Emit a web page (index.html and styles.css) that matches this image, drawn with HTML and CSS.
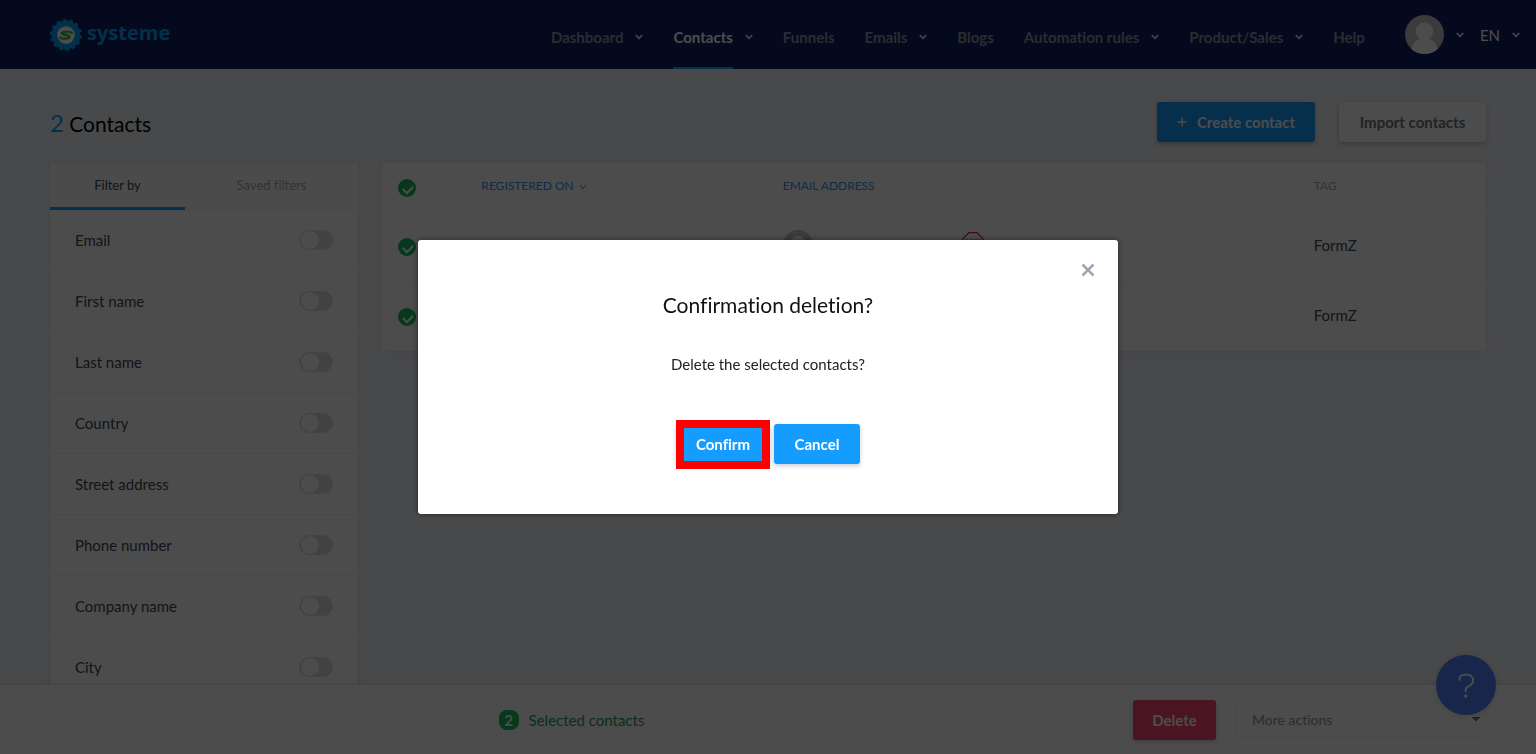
FILE: index.html
```html
<!DOCTYPE html>
<html lang="en">
<head>
<meta charset="utf-8">
<title>Contacts - systeme</title>
<link rel="stylesheet" href="styles.css">
</head>
<body>
<svg class="sprite" aria-hidden="true">
  <symbol id="chevron" viewBox="0 0 8 6"><path d="M.8 1l3.200 3.400L7.200 1" fill="none" stroke="currentColor" stroke-width="1.400"/></symbol>
  <symbol id="person" viewBox="0 0 40 40"><circle cx="20" cy="20" r="20" fill="#c5c5c5"/><circle cx="20" cy="16.500" r="9" fill="#fff"/><path d="M6.500 34.800C7.500 28.500 12 25 16 24h8c4 1 8.500 4.500 9.500 10.800A20 20 0 0 1 6.500 34.800z" fill="#fff"/></symbol>
</svg>
<div class="app">
  <header class="topbar">
    <a class="logo" href="#">
      <svg class="logo-mark" viewBox="0 0 32 32" aria-hidden="true">
        <circle cx="16" cy="16" r="14.300" fill="#04a4f4"/>
        <circle cx="16" cy="16" r="14" fill="none" stroke="#04a4f4" stroke-width="3.800" pathLength="28" stroke-dasharray="1.100 .9"/>
        <circle cx="16" cy="16" r="8.800" fill="#fff"/>
        <path d="M22.500 14.500c-1-1.600-3.200-2-6-1.900-3.600 0-5 1-4.500 2.100.5 1 7.500 1.200 7.500 2.900 0 1.600-2 2-4.500 2-2.600 0-4.700-.3-5.500-1.900" fill="none" stroke="#44bd44" stroke-width="2.400"/>
      </svg>
      <span>systeme</span>
    </a>
    <nav class="nav">
      <a href="#"><span>Dashboard</span><svg class="chev"><use href="#chevron"/></svg></a>
      <a class="active" href="#"><span>Contacts</span><svg class="chev"><use href="#chevron"/></svg></a>
      <a href="#"><span>Funnels</span></a>
      <a href="#"><span>Emails</span><svg class="chev"><use href="#chevron"/></svg></a>
      <a href="#"><span>Blogs</span></a>
      <a href="#"><span>Automation rules</span><svg class="chev"><use href="#chevron"/></svg></a>
      <a href="#"><span>Product/Sales</span><svg class="chev"><use href="#chevron"/></svg></a>
      <a href="#"><span>Help</span></a>
    </nav>
    <button class="menu-button" type="button" aria-label="Account"><svg class="avatar"><use href="#person"/></svg><svg class="chev"><use href="#chevron"/></svg></button>
    <button class="menu-button lang" type="button">EN<svg class="chev"><use href="#chevron"/></svg></button>
  </header>

  <main class="main">
    <div class="heading">
      <h1><span class="count">2</span> Contacts</h1>
      <button class="btn btn-primary create" type="button"><svg class="plus" viewBox="0 0 10 10" aria-hidden="true"><path d="M5 .5v9M.5 5h9" stroke="currentColor" stroke-width="1.300"/></svg>Create contact</button>
      <button class="btn btn-light" type="button">Import contacts</button>
    </div>
    <div class="columns">
      <aside class="card filters">
        <div class="tabs">
          <button class="tab selected" type="button">Filter by</button>
          <button class="tab" type="button">Saved filters</button>
        </div>
        <label class="filter">Email<input type="checkbox" class="toggle"></label>
        <label class="filter">First name<input type="checkbox" class="toggle"></label>
        <label class="filter">Last name<input type="checkbox" class="toggle"></label>
        <label class="filter">Country<input type="checkbox" class="toggle"></label>
        <label class="filter">Street address<input type="checkbox" class="toggle"></label>
        <label class="filter">Phone number<input type="checkbox" class="toggle"></label>
        <label class="filter">Company name<input type="checkbox" class="toggle"></label>
        <label class="filter">City<input type="checkbox" class="toggle"></label>
      </aside>
      <table class="card contacts">
        <colgroup><col class="c-check"><col class="c-date"><col class="c-email"><col></colgroup>
        <thead>
          <tr>
            <th><input type="checkbox" class="check" checked aria-label="Select all"></th>
            <th><a href="#">REGISTERED ON <svg class="sort"><use href="#chevron"/></svg></a></th>
            <th><a href="#">EMAIL ADDRESS</a></th>
            <th>TAG</th>
          </tr>
        </thead>
        <tbody>
          <tr>
            <td><input type="checkbox" class="check" checked aria-label="Select contact 1"></td>
            <td></td>
            <td><div class="email-cell"><svg class="avatar-small"><use href="#person"/></svg><svg class="stop" viewBox="0 0 22 26" aria-hidden="true"><path d="M7 .7h8L21.300 7v9L15 22.300H7L.7 16V7z" fill="none" stroke="#e0262c" stroke-width="1.200"/><path d="M3.500 8h3M8 8h3M12.500 8h2.500M16.500 8h2.500M3.500 8v3M9.500 8v6M12.500 8v6M16.500 8v6" stroke="#e0262c"/></svg></div></td>
            <td>FormZ</td>
          </tr>
          <tr>
            <td><input type="checkbox" class="check" checked aria-label="Select contact 2"></td>
            <td></td>
            <td></td>
            <td>FormZ</td>
          </tr>
        </tbody>
      </table>
    </div>
  </main>

  <footer class="actions">
    <p class="selection"><span class="badge">2</span>Selected contacts</p>
    <button class="btn btn-danger" type="button">Delete</button>
    <select class="more" aria-label="More actions"><option>More actions</option></select>
  </footer>
</div>

<button class="help" type="button" aria-label="Help"><svg viewBox="0 0 60 60" aria-hidden="true"><path d="M23.500 25.500v-1c0-3.200 2.800-5 6.600-5 4.200 0 7 2.400 7 6s-2.600 5-5.200 6.100c-1.700.7-2.200 1.600-2.200 3.200V37" fill="none" stroke="#fff" stroke-width="2"/><circle cx="29.700" cy="41" r="1.700" fill="#fff"/></svg></button>

<div class="overlay">
  <section class="dialog" role="dialog" aria-modal="true" aria-labelledby="dialog-title">
    <button class="close" type="button" aria-label="Close"><svg viewBox="0 0 14 14"><path d="M1.500 1.500l11 11M12.500 1.500l-11 11" stroke="currentColor" stroke-width="2.600"/></svg></button>
    <h2 id="dialog-title">Confirmation deletion?</h2>
    <p>Delete the selected contacts?</p>
    <div class="dialog-buttons">
      <button class="btn btn-primary confirm" type="button">Confirm</button>
      <button class="btn btn-primary cancel" type="button">Cancel</button>
    </div>
  </section>
</div>
</body>
</html>
```
FILE: styles.css
```css
* { box-sizing: border-box; }

body {
  margin: 0;
  font: 400 15px/20px Lato, "Liberation Sans", sans-serif;
  font-variant-ligatures: none;
  color: #3c4858;
  background: #f1f3f7;
}

button, select, input { font: inherit; font-variant-ligatures: none; color: inherit; margin: 0; }
button { border: 0; padding: 0; background: none; cursor: pointer; }
a { color: inherit; text-decoration: none; }
.sprite { display: none; }

.app { display: flex; flex-direction: column; height: 100vh; }

/* Top bar */
.topbar {
  display: flex;
  align-items: center;
  flex: none;
  height: 69px;
  padding: 0 16px 0 50px;
  background: #112161;
  color: #fff;
}
.logo {
  display: flex;
  align-items: center;
  gap: 5px;
  margin-right: auto;
  font: 700 20px/26px "Open Sans", sans-serif;
  color: #04a4f4;
}
.logo span { padding-bottom: 4px; }
.logo-mark { width: 32px; height: 32px; }
.chev { width: 8px; height: 6px; flex: none; }
.nav { display: flex; gap: 30px; align-self: stretch; }
.nav a { display: flex; align-items: center; gap: 12px; font-weight: 700; }
.nav .chev { margin-top: 4px; }
.nav span {
  display: flex;
  align-items: center;
  height: 69px;
  padding-top: 6px;
  border-bottom: 2px solid transparent;
  color: #8c93a6;
}
.nav .active span { color: #fff; border-color: #149dff; }
.menu-button { display: flex; align-items: center; gap: 12px; margin-left: 40px; }
.lang { margin-left: 16px; }
.avatar { width: 39px; height: 39px; }

/* Page */
.main { flex: 1; min-height: 0; overflow: hidden; padding: 33px 50px 0; }
.heading { display: flex; align-items: center; gap: 24px; margin-bottom: 21px; }
h1 { flex: 1; margin: 2px 0 0; font-weight: 400; font-size: 21px; line-height: 24px; color: #000; }
.count { font-size: 24px; color: #149dff; }

.btn {
  height: 40px;
  padding: 0 19px;
  border-radius: 3px;
  font-weight: 700;
  color: #fff;
  box-shadow: 0 2px 4px rgba(40, 60, 90, .25);
}
.btn-primary { background: #149dff; }
.btn-light { background: #fff; color: #6b7684; min-width: 147px; }
.btn-danger { background: #f7446b; }
.create { display: flex; align-items: center; justify-content: center; gap: 10px; min-width: 158px; }
.plus { width: 10px; height: 10px; }

.columns { display: flex; align-items: flex-start; gap: 24px; }
.card { background: #fff; border-radius: 3px; box-shadow: 0 0 10px rgba(50, 70, 110, .08); }

.filters { flex: none; width: 308px; }
.tabs { display: flex; height: 47px; background: #fafafa; border-bottom: 1px solid #f1f1f1; }
.tab { flex: 1; padding-bottom: 2px; font-size: 13px; color: #a5adb7; }
.tab.selected { flex: none; width: 135px; height: 47px; padding-bottom: 0; border-bottom: 3px solid #149dff; color: #3c4858; }
.filter {
  display: flex;
  align-items: center;
  justify-content: space-between;
  height: 61px;
  padding: 0 25px;
  border-bottom: 1px solid #eef0f2;
}
.toggle {
  appearance: none;
  width: 34px;
  height: 20px;
  padding: 0 1px;
  border-radius: 10px;
  border: 1px solid #e0e2e4;
  background: #d9dcdf;
}
.toggle::before { content: ""; display: block; width: 18px; height: 18px; border-radius: 50%; background: #fff; }

.contacts { flex: 1; table-layout: fixed; border-collapse: collapse; text-align: left; }
.c-check { width: 9%; }
.c-date { width: 27.300%; }
.c-email { width: 48.100%; }
th, td { padding: 0; vertical-align: middle; border-bottom: 1px solid #f1f3f5; }
th { height: 47px; font-size: 12px; font-weight: 400; color: #a5adb7; }
th a { color: #2f96f0; }
td { height: 70px; }
th:first-child, td:first-child { padding: 3px 0 0 16px; }
.sort { width: 8px; height: 6px; margin-left: 2px; color: #a5adb7; }
.check {
  appearance: none;
  display: block;
  width: 18px;
  height: 18px;
  border-radius: 50%;
  background: #18b860;
  padding: 6px 5px;
}
.check::before {
  content: "";
  display: block;
  width: 8px;
  height: 5px;
  border: solid #fff;
  border-width: 0 0 2px 2px;
  transform: rotate(-45deg);
}
.email-cell { display: flex; align-items: center; gap: 149px; }
.avatar-small { width: 30px; height: 30px; }
.stop { width: 22px; height: 26px; }

/* Bulk actions */
.actions {
  display: flex;
  align-items: center;
  gap: 20px;
  flex: none;
  height: 70px;
  padding: 0 50px;
  background: #fff;
  border-top: 1px solid #e2e5e9;
  box-shadow: 0 -1px 3px rgba(40, 60, 90, .1);
}
.selection { display: flex; flex: 1; justify-content: center; gap: 10px; margin: 0; padding-right: 20px; color: #18a45a; }
.badge { width: 20px; height: 20px; border-radius: 8px; background: #18b860; color: #fff; font-weight: 700; text-align: center; }
.btn-danger { min-width: 83px; }
.more {
  appearance: none;
  width: 250px;
  height: 35px;
  padding: 0 15px;
  border: 1px solid #f1f1f1;
  border-radius: 3px;
  color: #8d949d;
  font-size: 14px;
  background: linear-gradient(to bottom left, #777 50%, transparent 50%) right 9px center / 4px 5px no-repeat,
    linear-gradient(to bottom right, #777 50%, transparent 50%) right 5px center / 4px 5px no-repeat, #fff;
}

.help {
  position: fixed;
  right: 40px;
  bottom: 39px;
  width: 60px;
  height: 60px;
  border-radius: 50%;
  background: #5080fa;
  box-shadow: 0 1px 6px rgba(0, 0, 0, .15);
}

/* Dialog */
.overlay {
  position: fixed;
  inset: 0;
  display: flex;
  align-items: center;
  justify-content: center;
  background: rgba(0, 0, 0, .7);
}
.dialog {
  position: relative;
  width: 700px;
  padding: 50px 20px;
  border-radius: 3px;
  background: #fff;
  color: #222;
  text-align: center;
  box-shadow: 0 0 6px rgba(0, 0, 0, .5);
}
.close { position: absolute; top: 23px; right: 23px; width: 14px; height: 14px; color: #9aa9b5; }
.close svg { display: block; }
h2 { margin: 0 0 34px; font-weight: 400; font-size: 21px; line-height: 30px; color: #111; }
.dialog p { margin: 0 0 50px; }
.dialog-buttons { display: flex; justify-content: center; gap: 4px; }
.confirm { position: relative; min-width: 94px; }
.confirm::after { content: ""; position: absolute; inset: -4px 0 -5px; border: 8px solid #f00; }
.cancel { min-width: 86px; }
```
